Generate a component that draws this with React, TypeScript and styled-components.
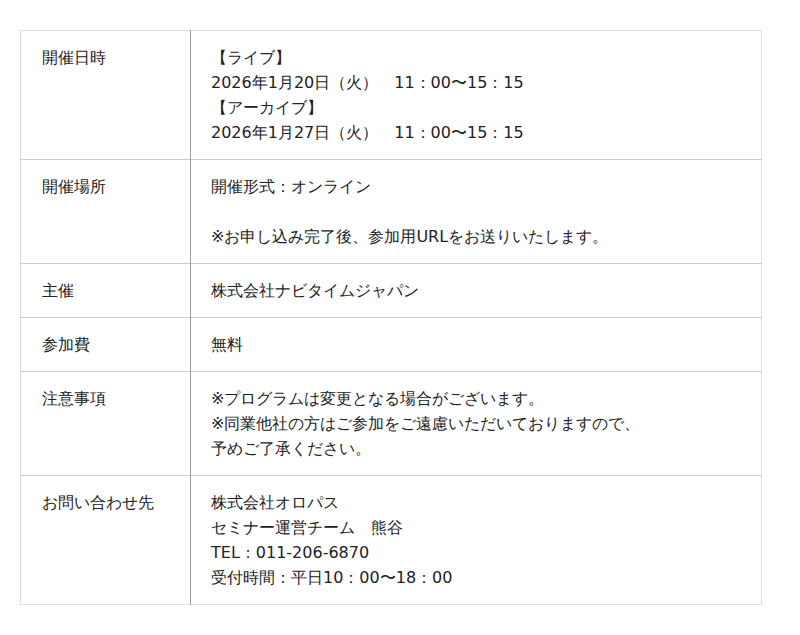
import React from 'react'
import styled, { createGlobalStyle } from 'styled-components'

const GlobalStyle = createGlobalStyle`
  html, body {
    margin: 0;
    padding: 0;
    background: #fff;
  }
  body {
    font-family: 'DejaVu Sans', sans-serif;
    color: #222;
  }
`

const Wrapper = styled.div`
  padding: 30px 20px;
`

const Table = styled.table`
  width: 742px;
  border-collapse: collapse;
  border: 1px solid #ddd;
  font-family: 'DejaVu Sans', sans-serif;
  font-size: 16px;
  line-height: 25px;
  color: #222;
`

const Row = styled.tr`
  border-bottom: 1px solid #ccc;

  &:last-child {
    border-bottom: 1px solid #ddd;
  }
`

const Head = styled.th`
  width: 128px;
  padding: 14px 20px 14px 21px;
  text-align: left;
  vertical-align: top;
  font-weight: normal;
  border-right: 1px solid #999;
`

const Cell = styled.td`
  padding: 14px 20px;
  text-align: left;
  vertical-align: top;
`

const Line = styled.div`
  min-height: 25px;
`

const ROWS: { label: string; lines: string[] }[] = [
  {
    label: '開催日時',
    lines: [
      '【ライブ】',
      '2026年1月20日（火）　11：00〜15：15',
      '【アーカイブ】',
      '2026年1月27日（火）　11：00〜15：15'
    ]
  },
  {
    label: '開催場所',
    lines: ['開催形式：オンライン', '', '※お申し込み完了後、参加用URLをお送りいたします。']
  },
  { label: '主催', lines: ['株式会社ナビタイムジャパン'] },
  { label: '参加費', lines: ['無料'] },
  {
    label: '注意事項',
    lines: [
      '※プログラムは変更となる場合がございます。',
      '※同業他社の方はご参加をご遠慮いただいておりますので、',
      '予めご了承ください。'
    ]
  },
  {
    label: 'お問い合わせ先',
    lines: ['株式会社オロパス', 'セミナー運営チーム　熊谷', 'TEL：011-206-6870', '受付時間：平日10：00〜18：00']
  }
]

export default function App() {
  return (
    <>
      <GlobalStyle />
      <Wrapper>
        <Table>
          <tbody>
            {ROWS.map(row => (
              <Row key={row.label}>
                <Head>{row.label}</Head>
                <Cell>
                  {row.lines.map((line, i) => (
                    <Line key={i}>{line}</Line>
                  ))}
                </Cell>
              </Row>
            ))}
          </tbody>
        </Table>
      </Wrapper>
    </>
  )
}
